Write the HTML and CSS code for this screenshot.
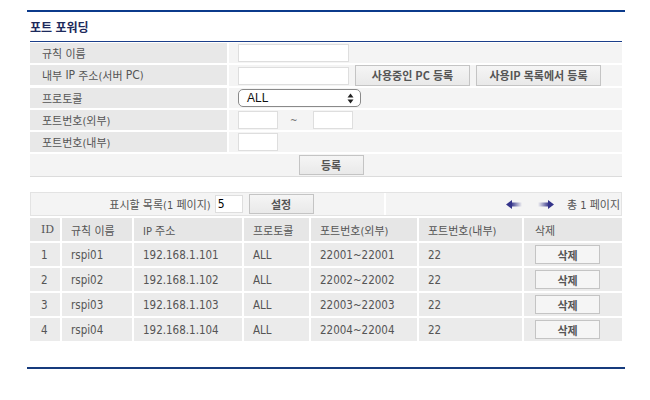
FILE: index.html
```html
<!DOCTYPE html>
<html lang="ko">
<head>
<meta charset="utf-8">
<title>포트 포워딩</title>
<link rel="stylesheet" href="styles.css">
</head>
<body>
<div class="page">
  <div class="rule-top"></div>
  <div class="title">포트 포워딩</div>
  <div class="inner">
    <div class="rule-sub"></div>
    <div class="form">
      <div class="lbl">규칙 이름</div>
      <div class="val"><span class="inp w111"></span></div>
      <div class="lbl">내부 <span class="lat">IP</span> 주소(서버 <span class="lat">PC</span>)</div>
      <div class="val"><span class="inp w111"></span><button class="btn b1">사용중인 PC 등록</button><button class="btn b2">사용IP 목록에서 등록</button></div>
      <div class="lbl">프로토콜</div>
      <div class="val"><span class="sel">ALL<svg class="selarr" width="7" height="11" viewBox="0 0 7 11"><path d="M3.5 0.5 L6.5 4.5 L0.5 4.5 Z M3.5 10.5 L6.5 6.5 L0.5 6.5 Z" fill="#222"/></svg></span></div>
      <div class="lbl">포트번호(외부)</div>
      <div class="val"><span class="inp w40"></span><span class="tilde">~</span><span class="inp w40"></span></div>
      <div class="lbl">포트번호(내부)</div>
      <div class="val"><span class="inp w40"></span></div>
      <div class="btnrow"><button class="btn b3">등록</button></div>
    </div>

    <div class="bar">
      <div class="bar-left">표시할 목록(1 페이지)<span class="inp num">5</span><button class="btn b4">설정</button></div>
      <div class="bar-right">
        <svg width="16" height="9" viewBox="0 0 16 9" class="arr">
          <defs><linearGradient id="gl" x1="0" x2="1" y1="0" y2="0"><stop offset="0" stop-color="#34348a"/><stop offset="1" stop-color="#34348a" stop-opacity="0"/></linearGradient></defs>
          <path d="M0 4.5 L6 0 L6 9 Z" fill="#34348a"/><rect x="5" y="2.5" width="11" height="4" fill="url(#gl)"/>
        </svg>
        <svg width="16" height="9" viewBox="0 0 16 9" class="arr arr2">
          <defs><linearGradient id="gr" x1="1" x2="0" y1="0" y2="0"><stop offset="0" stop-color="#34348a"/><stop offset="1" stop-color="#34348a" stop-opacity="0"/></linearGradient></defs>
          <path d="M16 4.5 L10 0 L10 9 Z" fill="#34348a"/><rect x="0" y="2.5" width="11" height="4" fill="url(#gr)"/>
        </svg>
        <span class="total">총 1 페이지</span>
      </div>
    </div>

    <div class="list">
      <div class="row head"><div class="c idh">ID</div><div class="c">규칙 이름</div><div class="c">IP 주소</div><div class="c">프로토콜</div><div class="c">포트번호(외부)</div><div class="c">포트번호(내부)</div><div class="c">삭제</div></div>
      <div class="row"><div class="c">1</div><div class="c">rspi01</div><div class="c">192.168.1.101</div><div class="c">ALL</div><div class="c">22001~22001</div><div class="c">22</div><div class="c"><button class="btn del">삭제</button></div></div>
      <div class="row"><div class="c">2</div><div class="c">rspi02</div><div class="c">192.168.1.102</div><div class="c">ALL</div><div class="c">22002~22002</div><div class="c">22</div><div class="c"><button class="btn del">삭제</button></div></div>
      <div class="row"><div class="c">3</div><div class="c">rspi03</div><div class="c">192.168.1.103</div><div class="c">ALL</div><div class="c">22003~22003</div><div class="c">22</div><div class="c"><button class="btn del">삭제</button></div></div>
      <div class="row"><div class="c">4</div><div class="c">rspi04</div><div class="c">192.168.1.104</div><div class="c">ALL</div><div class="c">22004~22004</div><div class="c">22</div><div class="c"><button class="btn del">삭제</button></div></div>
    </div>
  </div>
  <div class="rule-bottom"></div>
</div>
</body>
</html>
```
FILE: styles.css
```css
html, body {
  margin: 0;
  background: #fff;
}
body {
  font-family: "DejaVu Sans Condensed", "Noto Sans CJK KR", sans-serif;
  font-size: 11px;
  color: #555;
}
.page {
  margin-left: 27px;
  padding-top: 10px;
  width: 598px;
}
.rule-top {
  height: 2px;
  background: #0b3a8b;
}
.title {
  height: 29px;
  display: flex;
  align-items: center;
  padding-left: 3px;
  font-family: "Noto Sans CJK KR", sans-serif;
  font-weight: bold;
  color: #1d2a5c;
  font-size: 12px;
}
.inner {
  margin: 0 3px;
}
.rule-sub {
  height: 1px;
  background: #1b3f8a;
}
.form {
  display: grid;
  grid-template-columns: 197px 1fr;
  gap: 2px;
  margin-top: 1px;
  border-bottom: 1px solid #dcdcdc;
}
.lbl {
  background: #e8e8e8;
  height: 20px;
  display: flex;
  align-items: center;
  padding-left: 12px;
  white-space: pre;
}
.lat {
  font-size: 12px;
}
.val {
  background: #f4f4f4;
  height: 20px;
  display: flex;
  align-items: center;
  padding-left: 9px;
}
.val:nth-child(4) {
  height: 21px;
}
.btnrow {
  grid-column: 1 / -1;
  background: #f4f4f4;
  height: 22px;
  display: flex;
  align-items: center;
  justify-content: center;
  padding-left: 10px;
}
.inp {
  display: inline-block;
  box-sizing: border-box;
  height: 18px;
  background: #fff;
  border: 1px solid #dedede;
}
.w111 { width: 111px; }
.w40 { width: 40px; }
.tilde {
  margin: 0 15px 0 12px;
  color: #777;
  font-size: 10px;
}
.btn {
  box-sizing: border-box;
  font-family: "Noto Sans CJK KR", sans-serif;
  font-weight: bold;
  font-size: 11px;
  color: #555;
  background: linear-gradient(#f5f5f5, #e9e9e9);
  border: 1px solid #c4c4c4;
  border-radius: 0;
  padding: 0;
  margin: 0;
  height: 20px;
  line-height: 17px;
}
.b1 { width: 115px; margin-left: 6px; height: 21px; }
.b2 { width: 125px; margin-left: 6px; height: 21px; }
.b3 { width: 65px; height: 20px; }
.b4 { width: 65px; height: 20px; margin-left: 6px; }
.sel {
  box-sizing: border-box;
  width: 123px;
  height: 18px;
  border: 1px solid #8a8a8a;
  border-radius: 5px;
  background: #fff;
  display: flex;
  align-items: center;
  justify-content: space-between;
  padding: 0 6px 0 8px;
  color: #111;
  font-family: "Liberation Sans", sans-serif;
  font-size: 12px;
}
.bar {
  margin-top: 15px;
  border: 1px solid #e3e3e3;
  height: 22px;
  display: grid;
  grid-template-columns: 353px 1fr;
  gap: 2px;
  background: #fff;
}
.bar-left {
  background: #f4f4f4;
  display: flex;
  align-items: center;
  justify-content: center;
  padding-left: 8px;
}
.num {
  width: 28px;
  height: 18px;
  margin-left: 4px;
  color: #000;
  padding-left: 2px;
  line-height: 16px;
  font-size: 12px;
}
.bar-right {
  background: #f4f4f4;
  display: flex;
  align-items: center;
  justify-content: flex-end;
  padding-right: 1px;
}
.arr { display: block; }
.arr2 { margin-left: 16px; }
.total { margin-left: 13px; }
.list {
  margin-top: 2px;
}
.row {
  display: grid;
  grid-template-columns: 30px 70px 108px 65px 106px 103px 98px;
  gap: 2px;
  margin-bottom: 2px;
}
.c {
  background: #ebebeb;
  height: 23px;
  display: flex;
  align-items: center;
  padding-left: 11px;
  white-space: nowrap;
  font-size: 11.5px;
}
.head .c {
  background: #e6e6e6;
  font-size: 11px;
}
.head .idh {
  font-family: "DejaVu Serif", serif;
  font-size: 11px;
}
.row .c:nth-child(2), .row .c:nth-child(3), .row .c:nth-child(4),
.row .c:nth-child(5), .row .c:nth-child(6) {
  padding-left: 9px;
}
.del {
  width: 65px;
  height: 19px;
  line-height: 16px;
  background: #f5f5f5;
}
.rule-bottom {
  margin-top: 26px;
  height: 2px;
  background: #163b7d;
}
```
